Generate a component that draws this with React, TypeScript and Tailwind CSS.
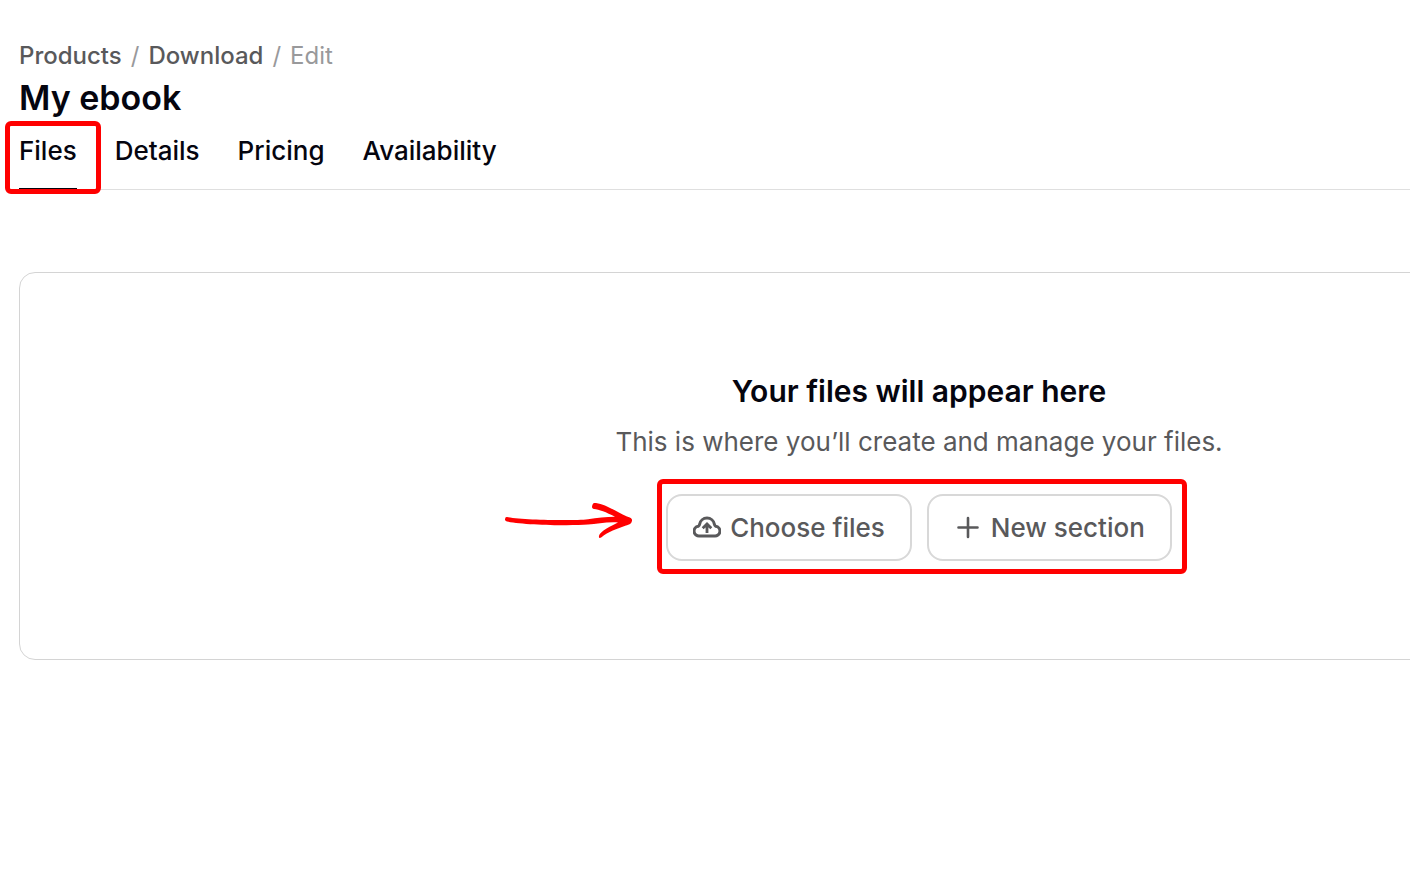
import type { ReactNode } from 'react';

const tabs = ['Files', 'Details', 'Pricing', 'Availability'];

function CloudUploadIcon() {
  return (
    <svg
      className="h-7 w-7"
      viewBox="0 0 28 28"
      fill="none"
      stroke="currentColor"
      strokeWidth="3"
      strokeLinecap="round"
      strokeLinejoin="round"
      aria-hidden="true"
    >
      <path d="M6.700 22H21.300A4.900 4.900 0 0 0 22.700 12.300C21.800 11.900 21.500 11.300 21.400 10.200A7.500 7.300 0 0 0 6.600 10.200C6.500 11.300 6.200 11.900 5.300 12.300A4.900 4.900 0 0 0 6.700 22Z" />
      <path d="M14 19V10.500M9.700 14.200 14 10l4.300 4.200" strokeWidth="2.8" strokeLinecap="butt" strokeLinejoin="miter" />
    </svg>
  );
}

function PlusIcon() {
  return (
    <svg
      className="h-7 w-7"
      viewBox="0 0 28 28"
      fill="none"
      stroke="currentColor"
      strokeWidth="2.6"
      strokeLinecap="round"
      aria-hidden="true"
    >
      <path d="M14 4v19M4.500 13.500h19" />
    </svg>
  );
}

function Arrow() {
  return (
    <svg className="absolute top-1.5 -left-42 h-10 w-34" viewBox="0 0 136 40" fill="#ff0000" aria-hidden="true">
      <path d="M9 17C25 20 75 21 90 19.200C99 18 108 16.800 117 16.800C108 12 101 9.500 96 9C94.500 8.800 93.800 8 94.100 6L94.700 4.300C95 3.300 96.200 2.800 98 3C108 4.500 118 11.500 129 16.500Q134.500 18 134 20.500C133.500 24 131 24.600 128 25.600C119 28.800 110 32 103.500 37.200Q100.500 39.200 101 35.800C102 31 114 25.500 120 22.400C108 21.800 99 23.800 90 24.600C72 26 25 25 9 21.500Q6.800 21 7 19.200Q7.200 16.600 9 17Z" />
    </svg>
  );
}

function OutlineButton({ icon, children }: { icon: ReactNode; children: ReactNode }) {
  return (
    <button
      type="button"
      className="flex h-[67px] items-center gap-[9px] rounded-2xl border-2 border-[#d8d8d8] px-[25px] text-[26px] leading-8 font-medium"
    >
      {icon}
      {children}
    </button>
  );
}

export default function App() {
  return (
    <div className="min-h-screen overflow-hidden bg-white pt-10 pl-[19px] font-['Inter',sans-serif] text-[#05050f]">
      <div className="min-w-[1800px]">
        <nav aria-label="Breadcrumb" className="flex gap-[9px] text-[24px] leading-8 text-[#99999b]">
          <a href="#products" className="font-medium text-[#59595b]">
            Products
          </a>
          <span>/</span>
          <a href="#download" className="font-medium text-[#59595b]">
            Download
          </a>
          <span>/</span>
          <span>Edit</span>
        </nav>

        <h1 className="mt-1 text-[34px] leading-11 font-semibold">My ebook</h1>

        <nav aria-label="Product" className="flex h-[70px] gap-[38px] border-b border-[#dfdfdf] text-[26px] leading-8 font-medium">
          {tabs.map((tab) =>
            tab === 'Files' ? (
              <a key={tab} href="#files" aria-current="page" className="relative h-[70px] border-b-2 border-[#05050f] pt-[15px]">
                {tab}
                <span className="absolute top-px -right-6 -bottom-[6px] -left-[14px] rounded-md border-5 border-[#ff0000]" />
              </a>
            ) : (
              <a key={tab} href={`#${tab.toLowerCase()}`} className="pt-[15px]">
                {tab}
              </a>
            ),
          )}
        </nav>

        <section className="mt-[82px] flex flex-col items-center rounded-2xl border border-[#d4d4d4] pt-[98px] pb-[98px]">
          <h2 className="text-[30px] leading-10 font-semibold">Your files will appear here</h2>
          <p className="mt-[15px] text-[26px] leading-8 text-[#59595b]">
            This is where you’ll create and manage your files.
          </p>
          <div className="relative mt-9 flex gap-[15px] text-[#59595b]">
            <OutlineButton icon={<CloudUploadIcon />}>Choose files</OutlineButton>
            <OutlineButton icon={<PlusIcon />}>New section</OutlineButton>
            <span className="pointer-events-none absolute -top-[15px] -right-[15px] -bottom-[13px] -left-[9px] rounded-md border-5 border-[#ff0000]" />
            <Arrow />
          </div>
        </section>
      </div>
    </div>
  );
}
